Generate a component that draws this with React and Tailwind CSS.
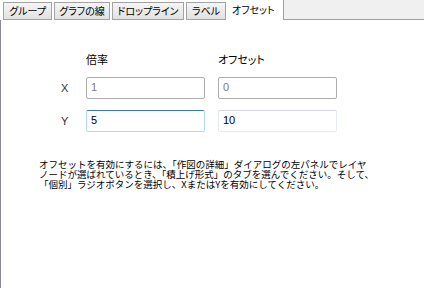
import React from "react";

const font = "font-['Noto_Sans_CJK_JP','Noto_Sans',sans-serif]";

const tabs = [
  { label: "グループ", w: "w-[49px]" },
  { label: "グラフの線", w: "w-[56px]" },
  { label: "ドロップライン", w: "w-[72px]" },
  { label: "ラベル", w: "w-[40px]" },
];

const Field = ({ value, state }) => {
  const styles = {
    disabled: "border-[#adadad] text-[#7a7a7a]",
    focus: "border-[#b7d9ed] border-t-[#3d7bad] text-black",
    normal: "border-[#e3e9ef] border-t-[#d2d5db] text-black",
  };
  return (
    <input
      type="text"
      readOnly
      value={value}
      className={`w-[119px] h-[22px] rounded-[2px] border bg-white px-[4px] pb-[2px] text-[11px] font-['Liberation_Sans',sans-serif] outline-none ${styles[state]}`}
    />
  );
};

export default function App() {
  return (
    <div className={`w-[424px] h-[288px] bg-white flex flex-col overflow-hidden ${font} [font-feature-settings:'palt']`}>
      <div className="flex h-[20px] items-end pl-[3px] gap-[2px]">
        {tabs.map((t) => (
          <div
            key={t.label}
            className={`${t.w} h-[18px] border border-[#a3a3a3] bg-gradient-to-b from-[#f5f5f5] to-[#e1e1e1] flex items-center justify-center text-[10px] leading-none text-black`}
          >
            {t.label}
          </div>
        ))}
        <div className="w-[56px] h-[20px] flex items-center pl-[5px] text-[10px] leading-none text-black -ml-[1px]">
          オフセット
        </div>
        <div className="flex-1 h-[20px] bg-[#f0f0f0] border-l border-b border-[#a0a0a0] -ml-[2px]" />
      </div>

      <div className="flex-1 border-l border-[#888b95] pl-[38px]">
        <div className="pl-[22px]">
          <div className="flex mt-[32px] h-[14px] items-center text-[11px] text-black">
            <span className="w-[25px]" />
            <span className="w-[132px]">倍率</span>
            <span>オフセット</span>
          </div>

          <div className="flex items-center mt-[11px]">
            <span className="w-[25px] text-[11px] text-[#333] font-['Liberation_Sans',sans-serif]">X</span>
            <Field value="1" state="disabled" />
            <span className="w-[13px]" />
            <Field value="0" state="disabled" />
          </div>

          <div className="flex items-center mt-[11px]">
            <span className="w-[25px] text-[11px] text-[#333] font-['Liberation_Sans',sans-serif]">Y</span>
            <Field value="5" state="focus" />
            <span className="w-[13px]" />
            <Field value="10" state="normal" />
          </div>
        </div>

        <p className="mt-[27px] text-[9.5px] leading-[10px] text-black whitespace-nowrap [font-feature-settings:normal]">
          オフセットを有効にするには、「作図の詳細」ダイアログの左パネルでレイヤ
          <br />
          ノードが選ばれているとき、「積上げ形式」のタブを選んでください。そして、
          <br />
          「個別」ラジオボタンを選択し、XまたはYを有効にしてください。
        </p>
      </div>
    </div>
  );
}
